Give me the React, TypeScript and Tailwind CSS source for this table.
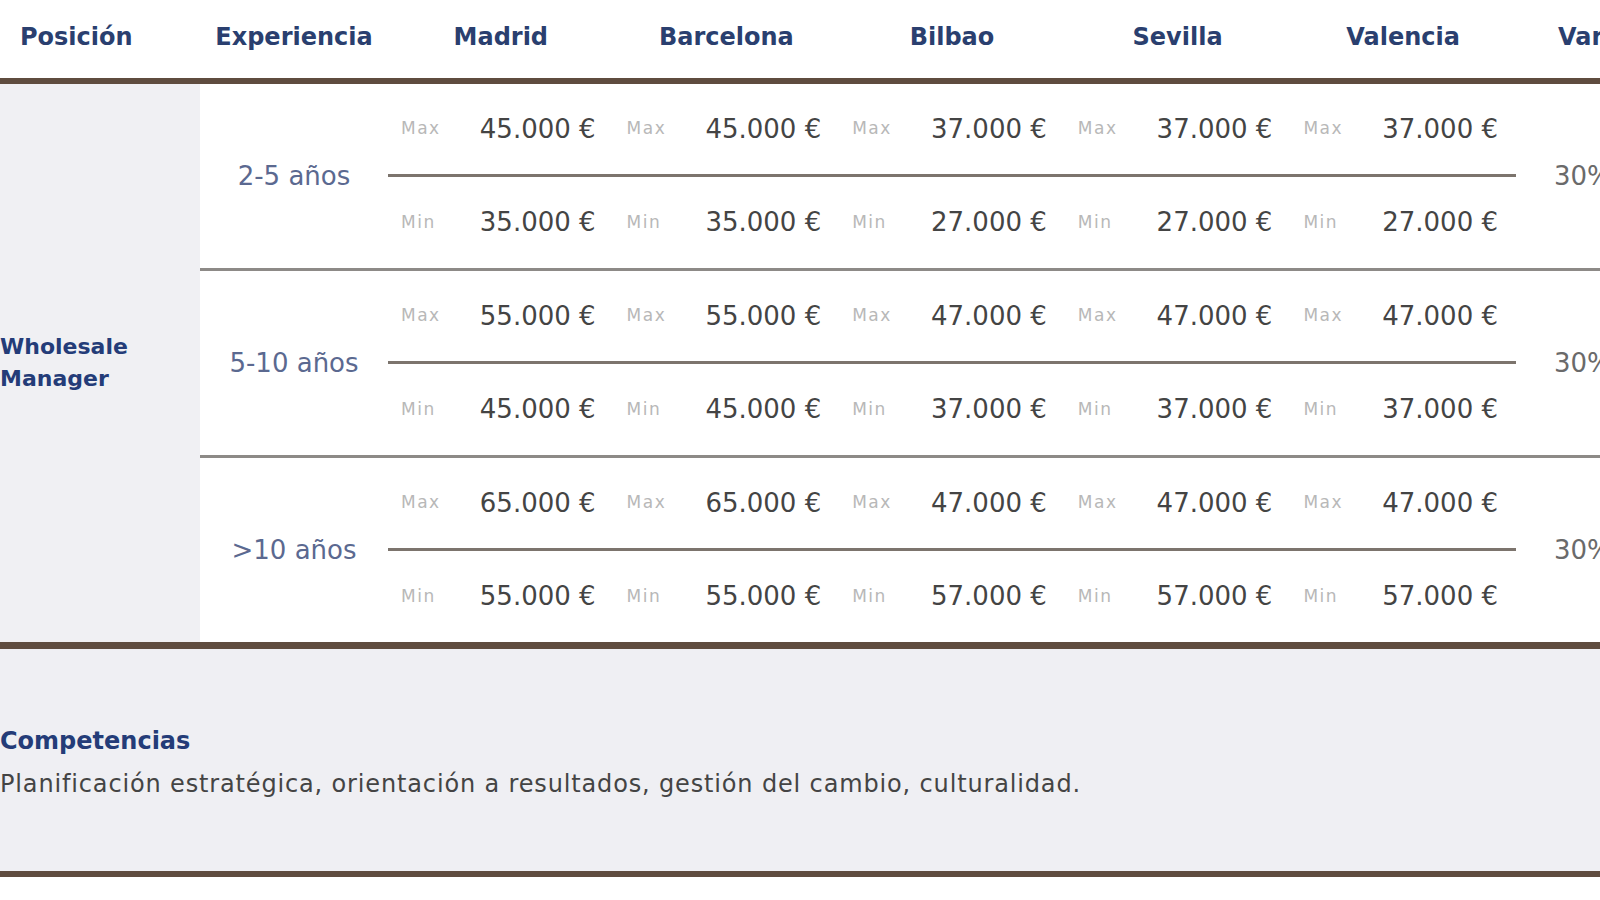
import React from 'react';

interface ExpRow {
  exp: string;
  max: string[];
  min: string[];
  variable: string;
}

const cities = ['Madrid', 'Barcelona', 'Bilbao', 'Sevilla', 'Valencia'];

const rows: ExpRow[] = [
  {
    exp: '2-5 años',
    max: ['45.000 €', '45.000 €', '37.000 €', '37.000 €', '37.000 €'],
    min: ['35.000 €', '35.000 €', '27.000 €', '27.000 €', '27.000 €'],
    variable: '30%',
  },
  {
    exp: '5-10 años',
    max: ['55.000 €', '55.000 €', '47.000 €', '47.000 €', '47.000 €'],
    min: ['45.000 €', '45.000 €', '37.000 €', '37.000 €', '37.000 €'],
    variable: '30%',
  },
  {
    exp: '>10 años',
    max: ['65.000 €', '65.000 €', '47.000 €', '47.000 €', '47.000 €'],
    min: ['55.000 €', '55.000 €', '57.000 €', '57.000 €', '57.000 €'],
    variable: '30%',
  },
];

function SalaryLine({ label, values, height }: { label: string; values: string[]; height: string }) {
  return (
    <div className={`grid grid-cols-5 ${height}`}>
      {values.map((v, i) => (
        <div key={i} className="flex items-center justify-between pl-[13px] pr-[18px]">
          <span className="text-[17px] tracking-[1.5px] text-[#b8b8b8]">{label}</span>
          <span className="text-[26px] text-[#444444]">{v}</span>
        </div>
      ))}
    </div>
  );
}

function ExperienceRow({ row }: { row: ExpRow }) {
  return (
    <div className="flex h-[184px]">
      <div className="w-[188px] shrink-0 flex items-center justify-center text-[26px] text-[#5b6990]">
        {row.exp}
      </div>
      <div className="w-[1128px] shrink-0 flex flex-col">
        <SalaryLine label="Max" values={row.max} height="h-[90px]" />
        <div className="h-[3px] bg-[#7c746d]" />
        <SalaryLine label="Min" values={row.min} height="h-[91px]" />
      </div>
      <div className="flex-1 flex items-center pl-[38px] text-[26px] text-[#6a6a6a] whitespace-nowrap">
        {row.variable}
      </div>
    </div>
  );
}

export default function App() {
  return (
    <div className="w-[1600px] h-[900px] overflow-hidden bg-white font-['DejaVu_Sans',sans-serif]">
      {/* header */}
      <div className="flex h-[78px] items-center pb-[4px] font-bold text-[24px] text-[#2a3f6f] whitespace-nowrap">
        <div className="w-[200px] shrink-0 pl-[20px]">Posición</div>
        <div className="w-[188px] shrink-0 text-center">Experiencia</div>
        {cities.map((c) => (
          <div key={c} className="w-[225.6px] shrink-0 text-center">
            {c}
          </div>
        ))}
        <div className="flex-1 pl-[42px]">Variable</div>
      </div>
      <div className="h-[6px] bg-[#5f4c3f]" />

      {/* body */}
      <div className="flex">
        <div className="w-[200px] shrink-0 bg-[#f0f0f3] flex items-center">
          <div className="text-[22px] leading-[32px] font-bold text-[#243c78]">
            Wholesale
            <br />
            Manager
          </div>
        </div>
        <div className="flex-1 flex flex-col">
          {rows.map((r, i) => (
            <React.Fragment key={r.exp}>
              {i > 0 && <div className="h-[3px] bg-[#8d8a87]" />}
              <ExperienceRow row={r} />
            </React.Fragment>
          ))}
        </div>
      </div>
      <div className="h-[7px] bg-[#5f4c3f]" />

      {/* competencias */}
      <div className="h-[222px] bg-[#efeff3] pt-[76px]">
        <div className="text-[24px] leading-[32px] font-bold text-[#243c78]">Competencias</div>
        <div className="mt-[13px] text-[24px] leading-[28px] tracking-[0.85px] text-[#444444] whitespace-nowrap">
          Planificación estratégica, orientación a resultados, gestión del cambio, culturalidad.
        </div>
      </div>
      <div className="h-[6px] bg-[#5f4c3f]" />
    </div>
  );
}
